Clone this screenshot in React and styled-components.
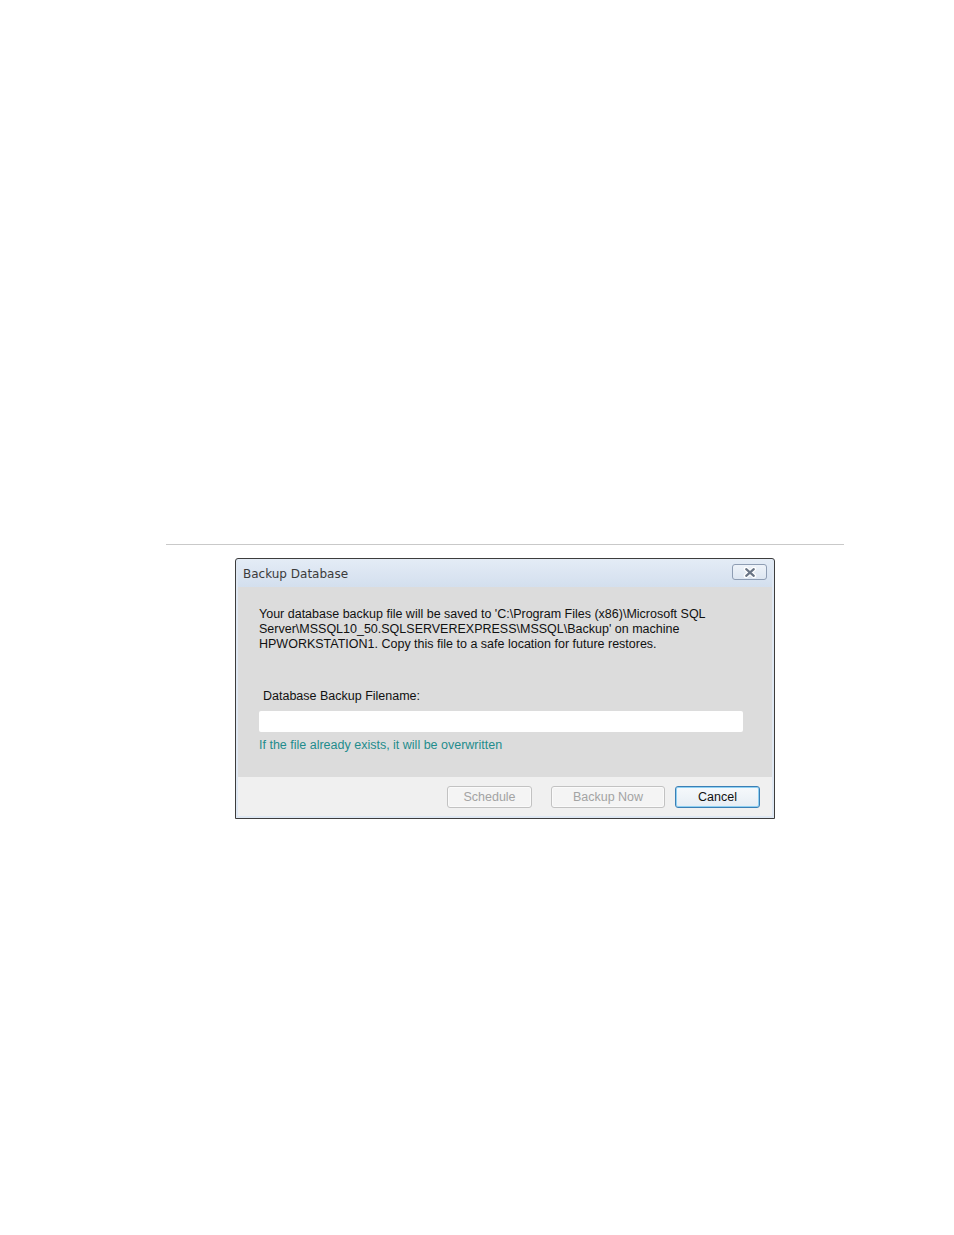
import React from "react";
import styled, { createGlobalStyle } from "styled-components";

const Global = createGlobalStyle`
  html, body { margin: 0; padding: 0; background: #ffffff; }
  body { font-family: "Liberation Sans", Arial, sans-serif; }
`;

const Page = styled.div`
  width: 954px;
  height: 1235px;
  padding: 544px 0 0 166px;
  box-sizing: border-box;
`;

const Rule = styled.div`
  width: 678px;
  height: 1px;
  background: #c9c9c9;
`;

const Dialog = styled.div`
  margin: 13px 0 0 69px;
  width: 540px;
  height: 261px;
  box-sizing: border-box;
  border: 1px solid #3d3d3d;
  border-radius: 3px 3px 0 0;
  background: #dfe8f3;
  display: flex;
  flex-direction: column;
  padding: 0 2px 2px 2px;
`;

const TitleBar = styled.div`
  height: 28px;
  flex: none;
  display: flex;
  align-items: center;
  justify-content: space-between;
  padding: 0 5px 0 5px;
  background: linear-gradient(#e4ecf6, #d3dfee);
`;

const Title = styled.div`
  font-family: "DejaVu Sans", sans-serif;
  font-size: 12px;
  color: #3b3b3b;
  padding-top: 2px;
`;

const CloseButton = styled.div`
  width: 35px;
  height: 16px;
  box-sizing: border-box;
  border: 1px solid #8e9db3;
  border-radius: 3px;
  background: linear-gradient(#eef3f9, #dde6f1);
  display: flex;
  align-items: center;
  justify-content: center;
  margin-top: -2px;
`;

const Content = styled.div`
  flex: none;
  height: 190px;
  box-sizing: border-box;
  background: #dcdcdc;
  padding: 20px 0 0 21px;
  display: flex;
  flex-direction: column;
`;

const Message = styled.div`
  font-size: 12.5px;
  line-height: 15px;
  color: #111;
`;

const Line = styled.div`
  white-space: nowrap;
`;

const Label = styled.div`
  margin: 37px 0 0 4px;
  font-size: 12.5px;
  line-height: 15px;
  color: #111;
`;

const Input = styled.div`
  margin-top: 7px;
  width: 484px;
  height: 21px;
  background: #ffffff;
  border-radius: 2px;
`;

const Hint = styled.div`
  margin-top: 6px;
  font-size: 12.5px;
  line-height: 15px;
  color: #1f8c8c;
`;

const Footer = styled.div`
  flex: 1;
  background: #f0f0f0;
  display: flex;
  justify-content: flex-end;
  align-items: flex-start;
  padding: 9px 12px 0 0;
  gap: 10px;
`;

const Button = styled.div`
  width: ${(p) => p.$w}px;
  height: 22px;
  box-sizing: border-box;
  margin-left: ${(p) => p.$ml || 0}px;
  border-radius: 3px;
  display: flex;
  align-items: center;
  justify-content: center;
  font-size: 12.5px;
  color: ${(p) => (p.$primary ? "#111" : "#a3a3a3")};
  border: 1px solid ${(p) => (p.$primary ? "#3b7fb5" : "#c2c2c2")};
  background: ${(p) =>
    p.$primary ? "linear-gradient(#f6f9fc, #e6edf4)" : "#f4f4f4"};
  box-shadow: ${(p) =>
    p.$primary ? "inset 0 0 0 1px #8fd0f2" : "inset 0 0 0 1px #fafafa"};
`;

const CloseIcon = () => (
  <svg width="14" height="11" viewBox="0 0 14 11">
    <path
      d="M3 2 L11 9 M11 2 L3 9"
      stroke="#ffffff"
      strokeWidth="4.5"
      strokeLinecap="round"
    />
    <path
      d="M3.2 2.2 L10.8 8.8 M10.8 2.2 L3.2 8.8"
      stroke="#6a7585"
      strokeWidth="2.2"
      strokeLinecap="round"
    />
  </svg>
);

export default function App() {
  return (
    <>
      <Global />
      <Page>
        <Rule />
        <Dialog>
          <TitleBar>
            <Title>Backup Database</Title>
            <CloseButton>
              <CloseIcon />
            </CloseButton>
          </TitleBar>
          <Content>
            <Message>
              <Line>
                Your database backup file will be saved to 'C:\Program Files
                (x86)\Microsoft SQL
              </Line>
              <Line>
                Server\MSSQL10_50.SQLSERVEREXPRESS\MSSQL\Backup' on machine
              </Line>
              <Line>
                HPWORKSTATION1. Copy this file to a safe location for future
                restores.
              </Line>
            </Message>
            <Label>Database Backup Filename:</Label>
            <Input />
            <Hint>If the file already exists, it will be overwritten</Hint>
          </Content>
          <Footer>
            <Button $w={85}>Schedule</Button>
            <Button $w={114} $ml={9}>
              Backup Now
            </Button>
            <Button $w={85} $primary>
              Cancel
            </Button>
          </Footer>
        </Dialog>
      </Page>
    </>
  );
}
